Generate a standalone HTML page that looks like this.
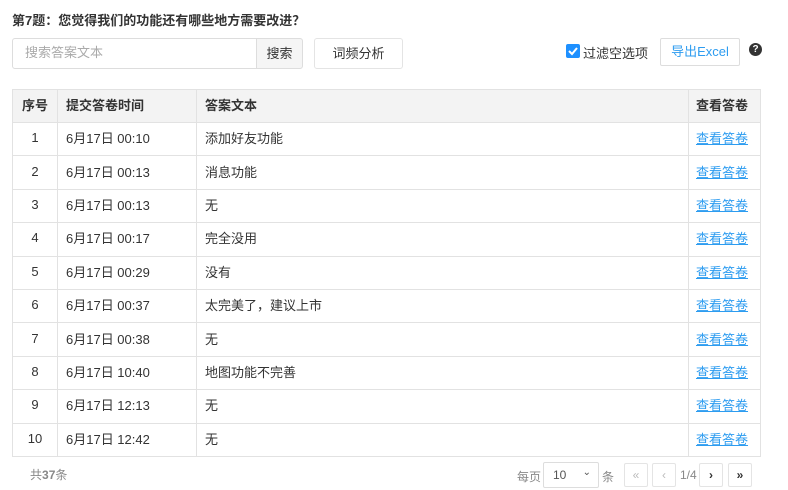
<!DOCTYPE html>
<html><head><meta charset="utf-8"><style>
*{box-sizing:border-box;margin:0;padding:0}
body{width:788px;height:490px;background:#fff;font-family:"Liberation Sans","Noto Sans CJK SC",sans-serif;font-size:13px;color:#333;position:relative;overflow:hidden}
.a{position:absolute}
.title{left:12px;top:10px;font-weight:bold;font-size:13px;color:#333}
.inp{left:12px;top:38px;width:245px;height:31px;border:1px solid #ddd;border-radius:3px 0 0 3px;padding:5px 12px;color:#aaa;line-height:18px}
.sbtn{left:256px;top:38px;width:47px;height:31px;border:1px solid #ddd;background:#f5f5f5;border-radius:0 3px 3px 0;text-align:center;line-height:29px}
.cbtn{left:314px;top:38px;width:89px;height:31px;border:1px solid #e4e4e4;border-radius:3px;text-align:center;line-height:29px}
.chk{left:566px;top:44px;width:14px;height:14px;background:#1e90ff;border-radius:2px}
.exp{left:660px;top:38px;width:80px;height:28px;border:1px solid #ddd;border-radius:2px;color:#2d9cf0;text-align:center;line-height:26px}
.q{left:749px;top:43px;width:13px;height:13px;border-radius:50%;background:#333;color:#fff;font-size:10px;font-weight:bold;text-align:center;line-height:13px}
table{position:absolute;left:12px;top:89px;width:749px;border-collapse:collapse;border:1px solid #e2e2e2}
td,th{border:1px solid #e2e2e2;height:33.4px;padding:0 8px;text-align:left;font-size:13px;line-height:14px}
th{background:#f3f3f3;font-weight:bold;height:33px}
td:first-child,th:first-child{text-align:center;width:45px;padding:0}
td:first-child{padding-bottom:2px}
td:nth-child(2){width:139px}
td:last-child,th:last-child{width:72px;padding:0 7px}
a{color:#2d9cf0;text-decoration:underline}
.pb{top:463px;width:24px;height:24px;border:1px solid #e4e4e4;border-radius:2px;text-align:center;line-height:22px;font-size:12px;color:#bbb}
</style></head><body>
<div class="a title">第7题：您觉得我们的功能还有哪些地方需要改进？</div>
<div class="a inp">搜索答案文本</div>
<div class="a sbtn">搜索</div>
<div class="a cbtn">词频分析</div>
<div class="a chk"><svg width="14" height="14"><path d="M3 7l3 3 5-6" stroke="#fff" stroke-width="2" fill="none"/></svg></div>
<div class="a" style="left:583px;top:43px">过滤空选项</div>
<div class="a exp">导出Excel</div>
<div class="a q">?</div>
<table>
<tr><th>序号</th><th>提交答卷时间</th><th>答案文本</th><th>查看答卷</th></tr>
<tr><td>1</td><td>6月17日 00:10</td><td>添加好友功能</td><td><a>查看答卷</a></td></tr>
<tr><td>2</td><td>6月17日 00:13</td><td>消息功能</td><td><a>查看答卷</a></td></tr>
<tr><td>3</td><td>6月17日 00:13</td><td>无</td><td><a>查看答卷</a></td></tr>
<tr><td>4</td><td>6月17日 00:17</td><td>完全没用</td><td><a>查看答卷</a></td></tr>
<tr><td>5</td><td>6月17日 00:29</td><td>没有</td><td><a>查看答卷</a></td></tr>
<tr><td>6</td><td>6月17日 00:37</td><td>太完美了，建议上市</td><td><a>查看答卷</a></td></tr>
<tr><td>7</td><td>6月17日 00:38</td><td>无</td><td><a>查看答卷</a></td></tr>
<tr><td>8</td><td>6月17日 10:40</td><td>地图功能不完善</td><td><a>查看答卷</a></td></tr>
<tr><td>9</td><td>6月17日 12:13</td><td>无</td><td><a>查看答卷</a></td></tr>
<tr><td>10</td><td>6月17日 12:42</td><td>无</td><td><a>查看答卷</a></td></tr>
</table>
<div class="a" style="left:30px;top:466px;font-size:12px;color:#888">共<b>37</b>条</div>
<div class="a" style="left:517px;top:468px;font-size:12px;color:#888">每页</div>
<div class="a" style="left:543px;top:462px;width:56px;height:26px;border:1px solid #ddd;border-radius:2px;padding:5px 9px;font-size:12px;color:#555">10<span style="position:absolute;right:7px;top:4px;font-size:10px">⌄</span></div>
<div class="a" style="left:602px;top:468px;font-size:12px;color:#888">条</div>
<div class="a pb" style="left:624px">«</div>
<div class="a pb" style="left:652px">‹</div>
<div class="a" style="left:680px;top:468px;font-size:12px;color:#888">1/4</div>
<div class="a pb" style="left:699px;color:#333;font-weight:bold">›</div>
<div class="a pb" style="left:728px;color:#333;font-weight:bold">»</div>
</body></html>
